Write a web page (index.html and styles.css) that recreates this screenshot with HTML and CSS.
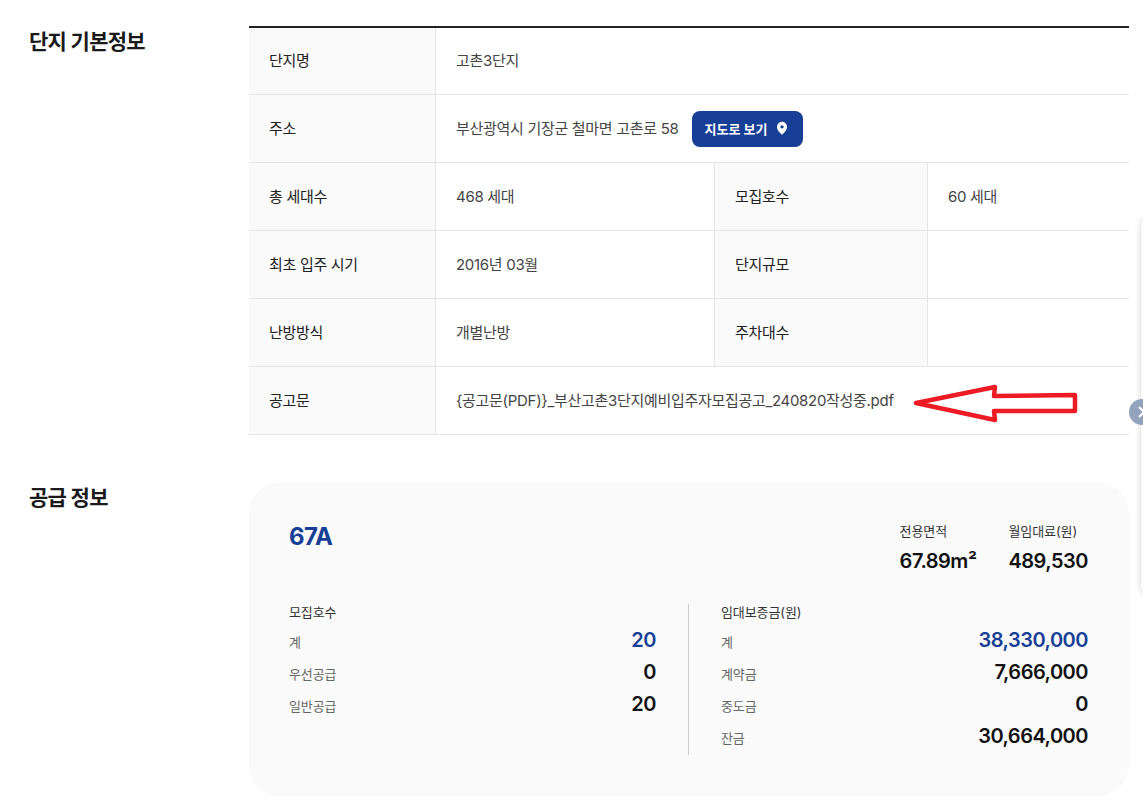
FILE: index.html
```html
<!DOCTYPE html>
<html lang="ko">
<head>
<meta charset="utf-8">
<title>단지 기본정보</title>
<link rel="stylesheet" href="styles.css">
</head>
<body>
<main class="page">
  <section class="section basic">
    <h2 class="heading">단지 기본정보</h2>
    <div class="table">
      <div class="row">
        <div class="th">단지명</div>
        <div class="td">고촌3단지</div>
      </div>
      <div class="row">
        <div class="th">주소</div>
        <div class="td"><span>부산광역시 기장군 철마면 고촌로 58</span><button class="map-btn">지도로 보기<svg class="pin" viewBox="0 0 12 14" width="14" height="16"><path fill="#fff" fill-rule="evenodd" d="M6 1.500a4.400 4.400 0 0 0-4.400 4.400C1.600 8.800 4.300 11.500 6 12.800c1.700-1.300 4.400-4 4.400-6.900A4.400 4.400 0 0 0 6 1.500zm0 3a1.500 1.500 0 1 1 0 3 1.500 1.500 0 0 1 0-3z"/></svg></button></div>
      </div>
      <div class="row">
        <div class="th">총 세대수</div>
        <div class="td half">468 세대</div>
        <div class="th second">모집호수</div>
        <div class="td last">60 세대</div>
      </div>
      <div class="row">
        <div class="th">최초 입주 시기</div>
        <div class="td half">2016년 03월</div>
        <div class="th second">단지규모</div>
        <div class="td last"></div>
      </div>
      <div class="row">
        <div class="th">난방방식</div>
        <div class="td half">개별난방</div>
        <div class="th second">주차대수</div>
        <div class="td last"></div>
      </div>
      <div class="row">
        <div class="th">공고문</div>
        <div class="td">{공고문(PDF)}_부산고촌3단지예비입주자모집공고_240820작성중.pdf</div>
      </div>
    </div>
  </section>

  <section class="section supply">
    <h2 class="heading">공급 정보</h2>
    <div class="card">
      <div class="card-top">
        <div class="type">67A</div>
        <div class="summary">
          <div class="stat">
            <div class="stat-label">전용면적</div>
            <div class="stat-value">67.89m²</div>
          </div>
          <div class="stat">
            <div class="stat-label">월임대료(원)</div>
            <div class="stat-value">489,530</div>
          </div>
        </div>
      </div>
      <div class="card-body">
        <div class="col col-left">
          <div class="col-title">모집호수</div>
          <div class="line"><span class="key">계</span><span class="val accent">20</span></div>
          <div class="line"><span class="key">우선공급</span><span class="val">0</span></div>
          <div class="line"><span class="key">일반공급</span><span class="val">20</span></div>
        </div>
        <div class="col col-right">
          <div class="col-title">임대보증금(원)</div>
          <div class="line"><span class="key">계</span><span class="val accent">38,330,000</span></div>
          <div class="line"><span class="key">계약금</span><span class="val">7,666,000</span></div>
          <div class="line"><span class="key">중도금</span><span class="val">0</span></div>
          <div class="line"><span class="key">잔금</span><span class="val">30,664,000</span></div>
        </div>
      </div>
    </div>
  </section>
</main>

<svg class="arrow" viewBox="0 0 170 44" width="170" height="44"><path fill="none" stroke="#ed1c24" stroke-width="4.500" stroke-linejoin="round" d="M3 20 L82 4 L81 13 L162 12 L162 28 L81 28 L82 37 Z"/></svg>
<div class="side-panel"></div>
<div class="side-close"><svg viewBox="0 0 26 26" width="26" height="26"><path fill="none" stroke="#fff" stroke-width="2" d="M10 8l10 10M20 8L10 18"/></svg></div>
</body>
</html>
```

FILE: styles.css
```css
* { box-sizing: border-box; }
html, body { margin: 0; padding: 0; height: 811px; overflow: hidden; background: #fff; }
body {
  font-family: "Inter", "Noto Sans CJK KR", sans-serif;
  color: #111;
  position: relative;
}
.page { padding: 27px 14px 0 29px; }
.section { display: flex; }
.heading {
  width: 220px;
  flex: none;
  margin: 0;
  font-size: 21px;
  line-height: 30px;
  font-weight: 700;
  letter-spacing: -0.7px;
  color: #1a1a1a;
}
.table { flex: 1; border-top: 2px solid #222; margin-top: -1px; }
.row { display: flex; height: 68px; border-bottom: 1px solid #e5e5e5; }
.row:first-child { height: 67px; }
.th {
  width: 187px;
  flex: none;
  display: flex;
  align-items: center;
  padding: 0 0 3px 20px;
  background: #fafafa;
  border-right: 1px solid #e5e5e5;
  font-size: 15px;
  letter-spacing: -0.3px;
  color: #222;
}
.th.second { width: 214px; border-left: 1px solid #e5e5e5; }
.td {
  flex: 1;
  display: flex;
  align-items: center;
  padding: 0 0 3px 20px;
  font-size: 15px;
  letter-spacing: -0.3px;
  color: #444;
}
.td.half { flex: none; width: 278px; }
.map-btn {
  display: inline-flex;
  align-items: center;
  gap: 8px;
  height: 36px;
  margin: 3px 0 0 14px;
  padding: 0 14px 0 12px;
  border: 0;
  border-radius: 8px;
  background: #183f96;
  color: #fff;
  font-family: inherit;
  font-size: 13px;
  font-weight: 700;
}
.pin { margin-top: -1px; }
.supply { margin-top: 48px; }
.card {
  flex: 1;
  height: 313px;
  padding: 35px 41px 0 40px;
  border-radius: 30px;
  background: #fafafa;
}
.card-top { display: flex; justify-content: space-between; align-items: flex-start; height: 86px; }
.type { font-size: 24px; line-height: 38px; font-weight: 700; color: #183f96; letter-spacing: -0.5px; }
.summary { display: flex; gap: 32px; }
.stat-label { font-size: 13px; line-height: 26px; letter-spacing: -0.1px; color: #333; }
.stat-value { font-size: 20px; line-height: 30px; font-weight: 600; letter-spacing: -0.5px; color: #111; margin-top: 2px; }
.card-body { display: flex; height: 151px; }
.col { flex: 1; }
.col-left { padding-right: 32px; }
.col-right { padding-left: 32px; border-left: 1px solid #ccc; }
.col-title { font-size: 13px; line-height: 18px; letter-spacing: -0.1px; color: #333; margin-top: -1px; margin-bottom: 5px; }
.line { display: flex; justify-content: space-between; align-items: center; height: 32px; }
.key { font-size: 13px; letter-spacing: -0.1px; color: #666; margin-top: -2px; }
.val { font-size: 20px; font-weight: 600; letter-spacing: -0.5px; color: #111; margin-top: -5px; }
.val.accent { color: #183f96; }
.arrow { position: absolute; left: 913px; top: 383px; }
.side-panel {
  position: absolute;
  left: 1141px;
  top: 216px;
  width: 30px;
  height: 380px;
  background: #fff;
  border-radius: 10px 0 0 10px;
  box-shadow: 0 0 6px rgba(0,0,0,.18);
}
.side-close {
  position: absolute;
  left: 1129px;
  top: 399px;
  width: 26px;
  height: 26px;
  border-radius: 50%;
  background: #94a3bd;
}
.side-close svg { display: block; }
```
